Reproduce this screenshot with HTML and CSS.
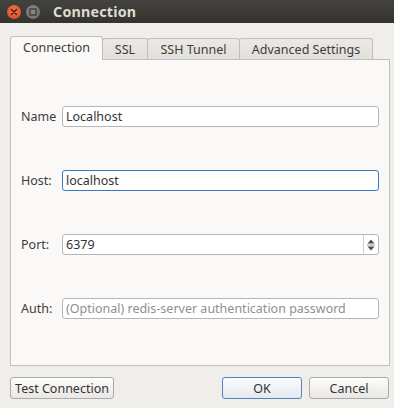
FILE: index.html
```html
<!DOCTYPE html>
<html>
<head>
<meta charset="utf-8">
<link rel="stylesheet" href="styles.css">
</head>
<body>
<div class="window">
  <div class="titlebar">
    <span class="wbtn close"><svg width="14" height="14" viewBox="0 0 14 14"><path d="M4.5 4.5 L9.5 9.5 M9.5 4.5 L4.5 9.5" stroke="#3a1a10" stroke-width="1.4" stroke-linecap="round"/></svg></span>
    <span class="wbtn min"><svg width="14" height="14" viewBox="0 0 14 14"><rect x="4" y="4" width="6" height="6" fill="none" stroke="#3b3a37" stroke-width="1.3"/></svg></span>
    <span class="title">Connection</span>
  </div>
  <div class="content">
    <div class="tabs">
      <div class="tab active">Connection</div>
      <div class="tab t-ssl">SSL</div>
      <div class="tab t-ssh">SSH Tunnel</div>
      <div class="tab t-adv">Advanced Settings</div>
    </div>
    <div class="pane">
      <div class="row"><label>Name</label><div class="input">Localhost</div></div>
      <div class="row"><label>Host:</label><div class="input focus">localhost</div></div>
      <div class="row"><label>Port:</label><div class="input spin"><span class="val">6379</span><span class="spinbtn"><svg width="10" height="18" viewBox="0 0 10 18"><path d="M1.5 7.5 L5 3.5 L8.5 7.5 Z" fill="#4c4c4c"/><path d="M1 9 H9" stroke="#9a9a9a" stroke-width="1"/><path d="M1.5 10.5 L5 14.5 L8.5 10.5 Z" fill="#4c4c4c"/></svg></span></div></div>
      <div class="row"><label>Auth:</label><div class="input placeholder">(Optional) redis-server authentication password</div></div>
    </div>
  </div>
  <div class="footer">
    <div class="btn test">Test Connection</div>
    <div class="spacer"></div>
    <div class="btn ok">OK</div>
    <div class="btn cancel">Cancel</div>
  </div>
</div>
</body>
</html>
```
FILE: styles.css
```css
html, body {
  margin: 0;
  padding: 0;
}
body {
  width: 394px;
  height: 408px;
  background: #f0eeeb;
  font-family: "Noto Sans", "Open Sans", sans-serif;
  font-size: 12.5px;
  color: #3c3c3c;
  overflow: hidden;
}
.window {
  display: flex;
  flex-direction: column;
  height: 408px;
}
.titlebar {
  height: 23px;
  background: linear-gradient(#43423e, #34332f);
  display: flex;
  align-items: center;
  padding-left: 7px;
  box-sizing: border-box;
}
.wbtn {
  width: 14px;
  height: 14px;
  border-radius: 50%;
  display: flex;
  align-items: center;
  justify-content: center;
}
.wbtn.close {
  background: radial-gradient(circle at 50% 40%, #f47a4d, #e0532a 70%, #c9461f);
}
.wbtn.min {
  margin-left: 5px;
  background: radial-gradient(circle at 50% 40%, #8e8c86, #74726c 75%, #5d5b56);
}
.title {
  margin-left: 13px;
  font-weight: bold;
  font-size: 14.3px;
  color: #dfdbd2;
  letter-spacing: 0.2px;
}
.content {
  padding: 13px 4px 0 10px;
}
.tabs {
  display: flex;
  align-items: flex-end;
  height: 23px;
  position: relative;
  z-index: 1;
}
.tab {
  height: 21px;
  box-sizing: border-box;
  border: 1px solid #c2bfba;
  border-bottom: none;
  background: linear-gradient(#ebe8e5, #e3e0dc);
  border-radius: 3px 3px 0 0;
  display: flex;
  align-items: center;
  justify-content: center;
  color: #3c3c3c;
  margin-left: -1px;
}
.tab.active {
  height: 24px;
  margin-left: 0;
  margin-bottom: -1px;
  width: 93px;
  background: #fbf9f7;
  padding-bottom: 2px;
}
.t-ssl { width: 46px; }
.t-ssh { width: 93px; }
.t-adv { width: 134px; }
.pane {
  height: 307px;
  box-sizing: border-box;
  border: 1px solid #c2bfba;
  background: #fbf9f7;
  padding: 46px 10px 0 10px;
  display: flex;
  flex-direction: column;
  gap: 43px;
}
.row {
  display: flex;
  align-items: center;
  height: 21px;
}
.row label {
  width: 41px;
  flex: none;
}
.input {
  flex: 1;
  height: 21px;
  box-sizing: border-box;
  border: 1px solid #b9b6b1;
  border-radius: 3px;
  background: #ffffff;
  display: flex;
  align-items: center;
  padding-left: 3px;
  color: #333333;
}
.input.focus {
  border-color: #3a79b8;
}
.input.placeholder {
  color: #8f8f8f;
}
.input.spin {
  padding-right: 0;
}
.val {
  flex: 1;
}
.spinbtn {
  width: 14px;
  height: 19px;
  border-left: 1px solid #d2cfca;
  display: flex;
  align-items: center;
  justify-content: center;
}
.footer {
  display: flex;
  padding: 11px 5px 0 10px;
  gap: 7px;
}
.spacer {
  flex: 1;
}
.btn {
  height: 22px;
  box-sizing: border-box;
  border: 1px solid #aeaba6;
  border-radius: 3px;
  background: linear-gradient(#fdfcfc, #e9e7e4);
  display: flex;
  align-items: center;
  justify-content: center;
  color: #333333;
}
.btn.test {
  width: 104px;
}
.btn.ok {
  width: 80px;
  border-color: #4f84bf;
  background: linear-gradient(#fcfcfd, #e4e8ee);
}
.btn.cancel {
  width: 80px;
}
```
